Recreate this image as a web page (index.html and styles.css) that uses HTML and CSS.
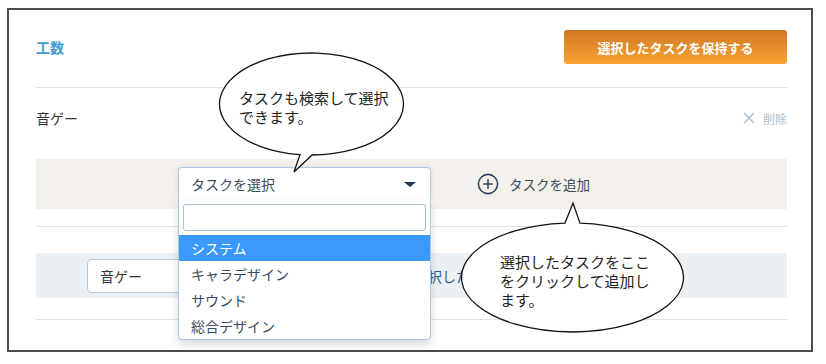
FILE: index.html
```html
<!DOCTYPE html>
<html lang="ja">
<head>
    <meta charset="UTF-8">
    <meta name="viewport" content="width=device-width, initial-scale=1.0">
    <title>工数</title>
    <link rel="stylesheet" href="styles.css">
</head>
<body>
    <div class="frame">
        <div class="head">
            <h2 class="title">工数</h2>
            <button type="button" class="keep-btn">選択したタスクを保持する</button>
        </div>

        <div class="task-row">
            <span class="task-name">音ゲー</span>
            <a class="remove">
                <svg width="12" height="12" viewBox="0 0 12 12">
                    <path d="M1 1 L11 11 M11 1 L1 11" stroke="#a9bccb" stroke-width="1.4" fill="none"/>
                </svg>
                削除
            </a>
        </div>

        <div class="add-block">
            <div class="add-row">
                <div class="select">
                    <span>タスクを選択</span>
                    <span class="caret"></span>
                    <div class="menu">
                        <input type="text" class="search">
                        <ul class="options">
                            <li class="active">システム</li>
                            <li>キャラデザイン</li>
                            <li>サウンド</li>
                            <li>総合デザイン</li>
                        </ul>
                    </div>
                </div>
                <button type="button" class="add-btn">
                    <svg width="22" height="22" viewBox="0 0 22 22">
                        <circle cx="11" cy="11" r="9.6" stroke="#34475a" stroke-width="1.6" fill="none"/>
                        <path d="M11 6.3 V15.7 M6.3 11 H15.7" stroke="#34475a" stroke-width="1.6"/>
                    </svg>
                    タスクを追加
                </button>
            </div>
        </div>

        <div class="picked-block">
            <div class="picked-row">
                <div class="picked-input">音ゲー</div>
                <a class="picked-add">選択した</a>
            </div>
        </div>

        <!-- annotation bubbles -->
        <div class="callout callout-search">
            <svg width="195" height="128" viewBox="215 48 195 128">
                <path d="M312 155 L294 172 L300 154.6 A92 51 0 1 1 312 155 Z" fill="#fff" stroke="#111" stroke-width="1.3"/>
            </svg>
            <p class="callout-text">タスクも検索して選択<br>できます。</p>
        </div>

        <div class="callout callout-add">
            <svg width="235" height="140" viewBox="455 198 235 140">
                <path d="M565 223.1 L573 203 L580 223.1 A111 54.5 0 1 1 565 223.1 Z" fill="#fff" stroke="#111" stroke-width="1.3"/>
            </svg>
            <p class="callout-text">選択したタスクをここ<br>をクリックして追加し<br>ます。</p>
        </div>
    </div>
</body>
</html>
```

FILE: styles.css
```css
body {
    margin: 0;
    background-color: #fff;
    font-family: "Noto Sans CJK JP", "Noto Sans", sans-serif;
    color: #333;
}

.frame {
    position: relative;
    box-sizing: border-box;
    width: 806px;
    height: 344px;
    margin: 8px 0 0 7px;
    padding: 0 24px 0 27px;
    border: 2px solid #4d4d4d;
}

.head {
    display: flex;
    justify-content: space-between;
    align-items: center;
    padding: 20px 0 23px;
    border-bottom: 1px solid #e2e2e2;
}

.title {
    margin: 0;
    font-size: 14px;
    font-weight: bold;
    color: #3e9ad0;
}

.keep-btn {
    width: 223px;
    height: 34px;
    border: none;
    border-radius: 3px;
    background: linear-gradient(#d07722, #f8a436);
    color: #fff;
    font-family: inherit;
    font-size: 13px;
    font-weight: bold;
    cursor: pointer;
}

.task-row {
    display: flex;
    justify-content: space-between;
    align-items: center;
    height: 60px;
}

.task-name {
    font-size: 14px;
    line-height: 20px;
}

.remove {
    display: flex;
    align-items: center;
    gap: 8px;
    font-size: 12px;
    color: #a9bccb;
}

.add-block {
    padding-bottom: 17px;
    border-bottom: 1px solid #e2e2e2;
}

.add-row {
    display: flex;
    align-items: flex-start;
    gap: 46px;
    box-sizing: border-box;
    height: 50px;
    margin-top: 11px;
    padding: 8px 0 0 142px;
    background-color: #f3efeb;
}

.select {
    position: relative;
    z-index: 2;
    display: flex;
    justify-content: space-between;
    align-items: center;
    box-sizing: border-box;
    width: 253px;
    height: 33px;
    padding: 0 14px 0 12px;
    border: 1px solid #a9cbe6;
    border-bottom: none;
    border-radius: 4px 4px 0 0;
    background-color: #fff;
    box-shadow: 0 0 6px rgba(0, 0, 0, 0.08);
    font-size: 14px;
    color: #3b4b5c;
}

.caret {
    width: 0;
    height: 0;
    border-left: 6px solid transparent;
    border-right: 6px solid transparent;
    border-top: 5px solid #1f3551;
}

.menu {
    position: absolute;
    top: 32px;
    left: -1px;
    right: -1px;
    padding-top: 4px;
    border: 1px solid #a9cbe6;
    border-top: none;
    border-radius: 0 0 4px 4px;
    background-color: #fff;
    box-shadow: 0 5px 10px rgba(0, 0, 0, 0.14);
}

.search {
    display: block;
    box-sizing: border-box;
    width: calc(100% - 8px);
    height: 27px;
    margin: 0 4px;
    border: 1px solid #aebfcc;
    border-radius: 3px;
}

.options {
    list-style: none;
    margin: 4px 0 0;
    padding: 0;
}

.options li {
    height: 26px;
    padding-left: 12px;
    line-height: 26px;
    font-size: 14px;
    color: #3b4b5c;
}

.options li.active {
    background-color: #3a99fb;
    color: #fff;
}

.add-btn {
    display: flex;
    align-items: center;
    gap: 10px;
    height: 33px;
    padding: 0;
    border: none;
    background: none;
    font-family: inherit;
    font-size: 13.5px;
    color: #3b4b5c;
}

.picked-block {
    padding: 26px 0 21px;
    border-bottom: 1px solid #e2e2e2;
}

.picked-row {
    display: flex;
    align-items: center;
    gap: 27px;
    height: 45px;
    padding-left: 51px;
    background-color: #ebf0f5;
}

.picked-input {
    display: flex;
    align-items: center;
    box-sizing: border-box;
    width: 300px;
    height: 34px;
    padding-left: 12px;
    border: 1px solid #b8cad8;
    border-radius: 4px;
    background-color: #fff;
    font-size: 14px;
}

.picked-add {
    font-size: 14px;
    color: #2f5e8c;
}

.callout {
    position: absolute;
    z-index: 3;
}

.callout svg {
    position: absolute;
    top: 0;
    left: 0;
}

.callout-text {
    position: absolute;
    margin: 0;
    white-space: nowrap;
    font-size: 15px;
    line-height: 19px;
    color: #222;
}

.callout-search {
    left: 206px;
    top: 38px;
    width: 195px;
    height: 128px;
}

.callout-search .callout-text {
    left: 24px;
    top: 40px;
}

.callout-add {
    left: 446px;
    top: 188px;
    width: 235px;
    height: 140px;
}

.callout-add .callout-text {
    left: 45px;
    top: 54px;
}
```
